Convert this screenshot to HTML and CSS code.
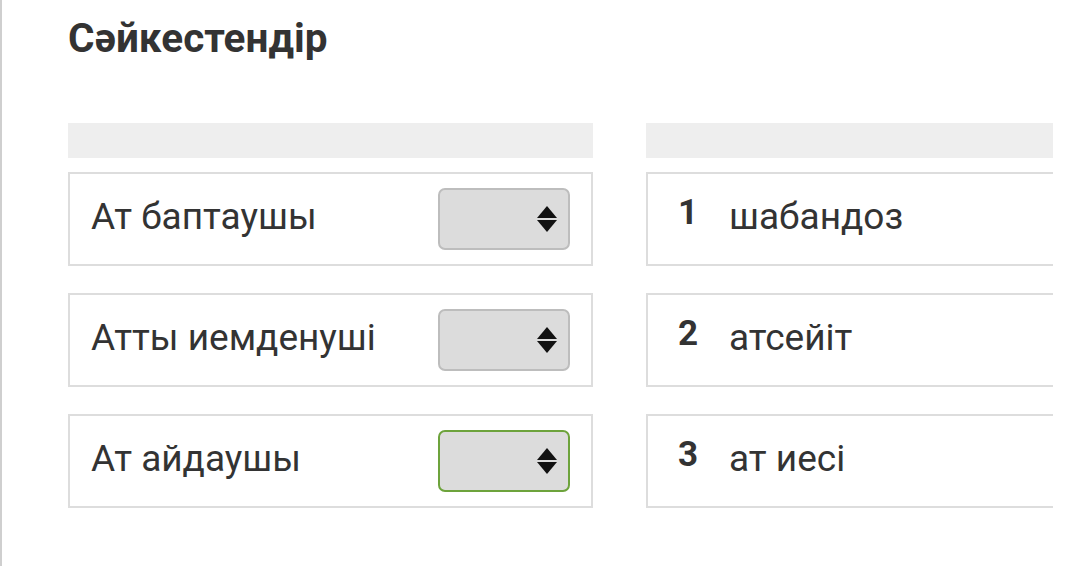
FILE: index.html
```html
<!DOCTYPE html>
<html lang="kk">
<head>
<meta charset="utf-8">
<link rel="stylesheet" href="styles.css">
</head>
<body>
<div class="page">
  <h1 class="title">Сәйкестендір</h1>
  <div class="match">
    <div class="col col-left">
      <div class="col-head"></div>
      <div class="row">
        <span class="label">Ат баптаушы</span>
        <div class="select"><span class="arrows"><i class="up"></i><i class="down"></i></span></div>
      </div>
      <div class="row">
        <span class="label">Атты иемденуші</span>
        <div class="select"><span class="arrows"><i class="up"></i><i class="down"></i></span></div>
      </div>
      <div class="row">
        <span class="label">Ат айдаушы</span>
        <div class="select active"><span class="arrows"><i class="up"></i><i class="down"></i></span></div>
      </div>
    </div>
    <div class="col col-right">
      <div class="col-head"></div>
      <div class="row">
        <span class="num">1</span><span class="label">шабандоз</span>
      </div>
      <div class="row">
        <span class="num">2</span><span class="label">атсейіт</span>
      </div>
      <div class="row">
        <span class="num">3</span><span class="label">ат иесі</span>
      </div>
    </div>
  </div>
</div>
</body>
</html>
```

FILE: styles.css
```css
html, body {
  margin: 0;
  padding: 0;
  background: #fff;
}
body {
  font-family: Roboto, "Noto Sans", sans-serif;
  color: #333;
  width: 1080px;
  height: 566px;
  overflow: hidden;
}
.page {
  height: 566px;
  border-left: 2px solid #cfcfcf;
  box-sizing: border-box;
  padding-left: 66px;
  width: 1053px;
  overflow: hidden;
}
.title {
  margin: 0;
  padding-top: 13px;
  font-size: 40.5px;
  font-weight: 700;
  line-height: 50px;
  color: #333;
  letter-spacing: 0;
}
.match {
  display: flex;
  gap: 53px;
  margin-top: 60px;
  width: 1200px;
}
.col {
  width: 525px;
  flex: none;
  display: flex;
  flex-direction: column;
}
.col-head {
  height: 35px;
  background: #eee;
  margin-bottom: 14px;
}
.row {
  height: 94px;
  box-sizing: border-box;
  border: 2px solid #ddd;
  display: flex;
  align-items: center;
  margin-bottom: 27px;
}
.col-left .row {
  padding: 0 21px 0 21px;
  justify-content: space-between;
}
.label {
  font-size: 37px;
  line-height: 42px;
  color: #333;
  margin-top: -4px;
}
.select {
  width: 132px;
  height: 62px;
  box-sizing: border-box;
  background: #dcdcdc;
  border: 2px solid #bdbdbd;
  border-radius: 7px;
  display: flex;
  align-items: center;
  justify-content: flex-end;
  padding-right: 11px;
  margin-top: 0;
}
.select.active {
  border-color: #6da33c;
}
.arrows {
  display: flex;
  flex-direction: column;
  gap: 2px;
  width: 20px;
}
.arrows i {
  display: block;
  width: 0;
  height: 0;
  border-left: 10px solid transparent;
  border-right: 10px solid transparent;
}
.arrows .up {
  border-bottom: 12px solid #111;
}
.arrows .down {
  border-top: 12px solid #111;
}
.col-right .row {
  padding-left: 30px;
  border-right: none;
}
.num {
  font-size: 35px;
  font-weight: 700;
  line-height: 40px;
  width: 51px;
  margin-top: -12px;
  color: #333;
}
```
